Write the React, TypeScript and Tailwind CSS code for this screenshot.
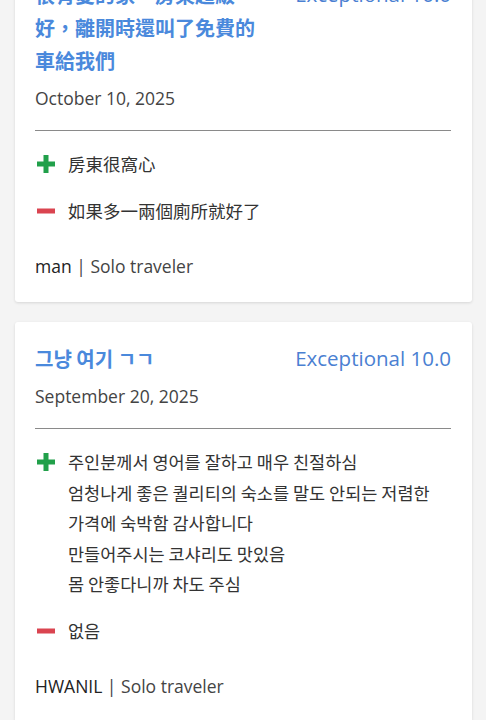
const latin = "font-['Open_Sans','Noto_Sans_CJK_TC','Noto_Sans_CJK_KR',sans-serif]";

type Review = {
  title: string;
  rating: string;
  date: string;
  pros: string[];
  cons: string[];
  name: string;
  kind: string;
  lang: "tc" | "kr";
};

const reviews: Review[] = [
  {
    title: "很有愛的家，房東超級好，離開時還叫了免費的車給我們",
    rating: "Exceptional 10.0",
    date: "October 10, 2025",
    pros: ["房東很窩心"],
    cons: ["如果多一兩個廁所就好了"],
    name: "man",
    kind: "Solo traveler",
    lang: "tc",
  },
  {
    title: "그냥 여기 ㄱㄱ",
    rating: "Exceptional 10.0",
    date: "September 20, 2025",
    pros: [
      "주인분께서 영어를 잘하고 매우 친절하심",
      "엄청나게 좋은 퀄리티의 숙소를 말도 안되는 저렴한",
      "가격에 숙박함 감사합니다",
      "만들어주시는 코샤리도 맛있음",
      "몸 안좋다니까 차도 주심",
    ],
    cons: ["없음"],
    name: "HWANIL",
    kind: "Solo traveler",
    lang: "kr",
  },
];

const Plus = () => (
  <svg width="18" height="18" viewBox="0 0 18 18" className="shrink-0">
    <rect x="0" y="6.5" width="18" height="5" fill="#21a04a" />
    <rect x="6.5" y="0" width="5" height="18" fill="#21a04a" />
  </svg>
);

const Minus = () => (
  <svg width="18" height="18" viewBox="0 0 18 18" className="shrink-0">
    <rect x="0" y="6.5" width="18" height="5" fill="#da4450" />
  </svg>
);

const ReviewCard = ({ r }: { r: Review }) => {
  const cjk =
    r.lang === "tc"
      ? "font-['Noto_Sans_CJK_TC',sans-serif]"
      : "font-['Noto_Sans_CJK_KR',sans-serif]";
  return (
    <div className="bg-white rounded-[3px] shadow-[0_1px_3px_rgba(0,0,0,0.12)] pt-5 pb-6 pl-5 pr-[21px]">
      <div className="flex flex-row justify-between items-start gap-4">
        <h2 className={`${cjk} text-[20px] leading-[33px] font-bold text-[#4a89dc] max-w-[236px]`}>
          {r.title}
        </h2>
        <span className={`${latin} text-[20.5px] leading-[33px] text-[#4a80d2] whitespace-nowrap`}>
          {r.rating}
        </span>
      </div>
      <p className={`${latin} mt-[9px] text-[17.5px] leading-6 text-[#444]`}>{r.date}</p>
      <div className="mt-5 border-t border-[#8a8a8a]" />
      <div className={`${cjk} mt-[18px] text-[17.5px] text-[#333]`}>
        <div className="flex flex-row gap-[13px]">
          <div className="h-[30.5px] flex items-center pl-[2px]">
            <Plus />
          </div>
          <div className="leading-[30.5px]">
            {r.pros.map((p) => (
              <div key={p}>{p}</div>
            ))}
          </div>
        </div>
        <div className="flex flex-row gap-[13px] mt-4">
          <div className="h-[30.5px] flex items-center pl-[2px]">
            <Minus />
          </div>
          <div className="leading-[30.5px]">
            {r.cons.map((p) => (
              <div key={p}>{p}</div>
            ))}
          </div>
        </div>
      </div>
      <p className={`${latin} mt-7 text-[17.5px] leading-6 text-[#444]`}>
        <span className="text-[#222] font-medium">{r.name}</span> | {r.kind}
      </p>
    </div>
  );
};

export default function App() {
  return (
    <div className="bg-[#f4f4f4] min-h-[720px] h-[720px] overflow-hidden pl-[15px] pr-[14px]">
      <div className="flex flex-col gap-5 mt-[-42px]">
        {reviews.map((r) => (
          <ReviewCard key={r.date} r={r} />
        ))}
      </div>
    </div>
  );
}
